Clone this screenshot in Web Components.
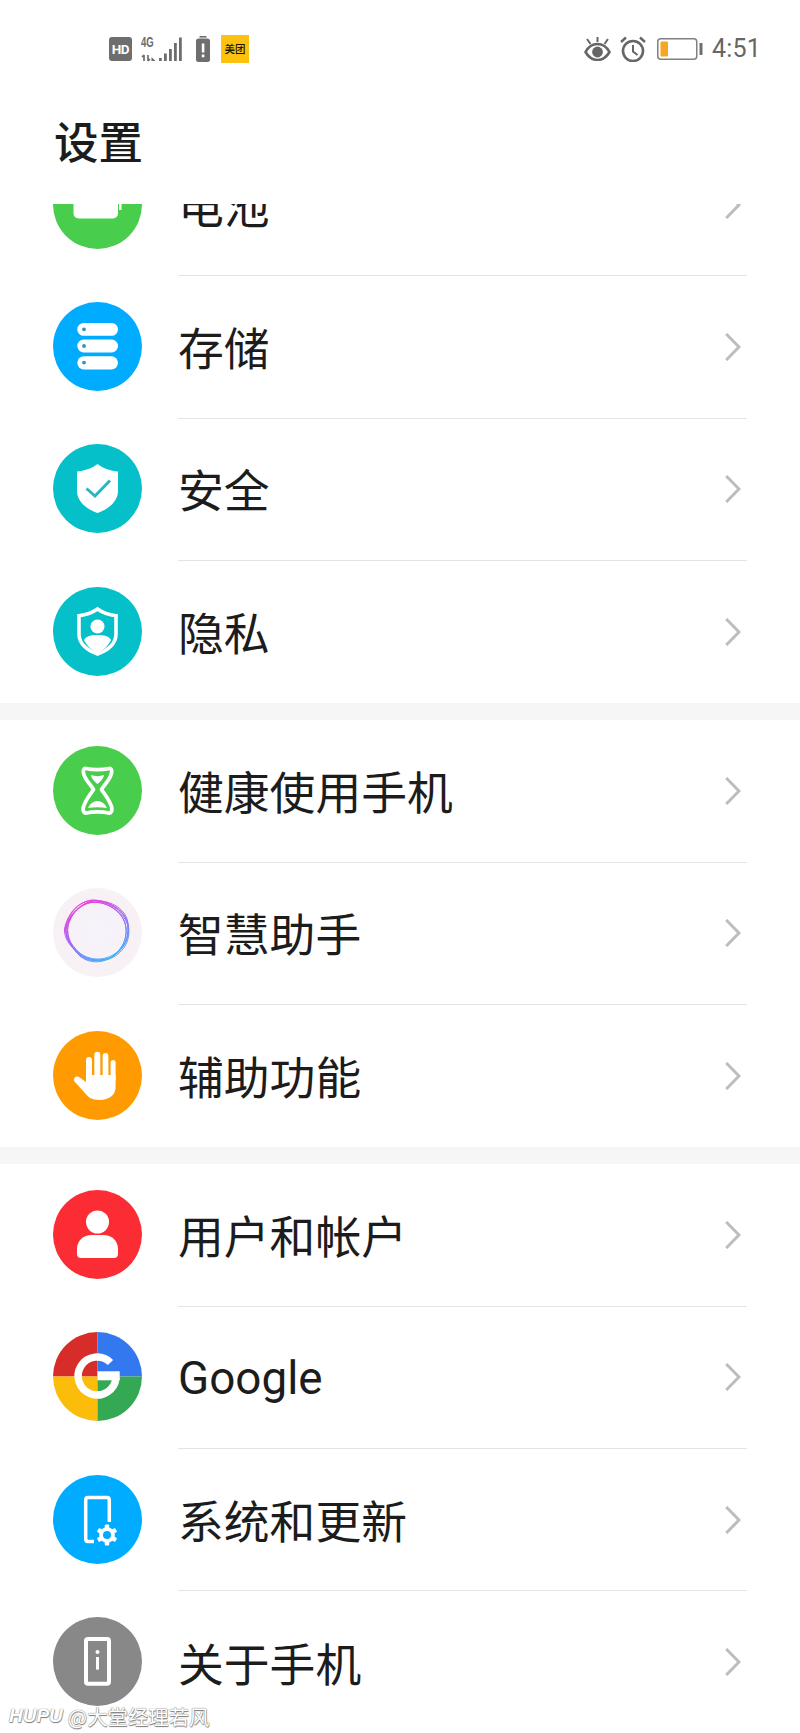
<!DOCTYPE html>
<html lang="zh">
<head>
<meta charset="utf-8">
<title>设置</title>
<style>
html,body{margin:0;padding:0;background:#fff;}
body{width:800px;height:1733px;overflow:hidden;position:relative;font-family:"Noto Sans CJK SC","Noto Sans",sans-serif;color:#1c1c1c;}
</style>
</head>
<body>
<status-bar></status-bar>
<page-title>设置</page-title>
<settings-list>
  <settings-section>
    <settings-row icon="battery">电池</settings-row>
    <settings-row icon="storage">存储</settings-row>
    <settings-row icon="security">安全</settings-row>
    <settings-row icon="privacy" last>隐私</settings-row>
  </settings-section>
  <settings-section>
    <settings-row icon="health">健康使用手机</settings-row>
    <settings-row icon="assistant">智慧助手</settings-row>
    <settings-row icon="access" last>辅助功能</settings-row>
  </settings-section>
  <settings-section>
    <settings-row icon="user">用户和帐户</settings-row>
    <settings-row icon="google"><span style="font-family:Roboto,'Noto Sans',sans-serif;display:inline-block;padding-top:4px">Google</span></settings-row>
    <settings-row icon="system">系统和更新</settings-row>
    <settings-row icon="about" last>关于手机</settings-row>
  </settings-section>
</settings-list>
<water-mark></water-mark>
<script>
const ICONS = {
  battery: `<circle cx="44.5" cy="44.5" r="44.5" fill="#48cd4c"/>
    <rect x="20.5" y="22" width="44.5" height="36.5" rx="5" fill="#fff"/>
    <rect x="66" y="38" width="2.5" height="12" fill="#fff"/>`,
  storage: `<circle cx="44.5" cy="44.5" r="44.5" fill="#00acff"/>
    <g fill="#fff"><rect x="24.3" y="21" width="40.7" height="12.8" rx="6.4"/><rect x="24.3" y="37.6" width="40.7" height="12.8" rx="6.4"/><rect x="24.3" y="54.2" width="40.7" height="13.2" rx="6.6"/></g>
    <g fill="#2a93cf"><circle cx="31" cy="27.3" r="1.9"/><circle cx="31" cy="44" r="1.9"/><circle cx="31" cy="60.6" r="1.9"/></g>`,
  security: `<circle cx="44.5" cy="44.5" r="44.5" fill="#05bfc9"/>
    <path d="M44.5 20 C50 24.5 58 27 65 27.5 V47 C65 57 56 65 44.5 69 C33 65 24 57 24 47 V27.5 C31 27 39 24.5 44.5 20Z" fill="#fff"/>
    <path d="M33.5 44.5 L42 52 L57 36.5" fill="none" stroke="#2ab6bf" stroke-width="3"/>`,
  privacy: `<circle cx="44.5" cy="44.5" r="44.5" fill="#05bfc9"/>
    <path d="M44.5 22 C50 26 57 28 63 28.7 V47 C63 56.5 55 63.8 44.5 67 C34 63.8 26 56.5 26 47 V28.7 C32 28 39 26 44.5 22Z" fill="none" stroke="#fff" stroke-width="3.6"/>
    <circle cx="44.5" cy="39.5" r="7" fill="#fff"/>
    <path d="M31 53 C33 49 38 48 44.5 48 C51 48 56 49 58 53 C54.5 60 49 64 44.5 66 C40 64 34.5 60 31 53Z" fill="#fff"/>`,
  health: `<circle cx="44.5" cy="44.5" r="44.5" fill="#48cd4c"/>
    <path d="M33 22.5 C39 24 50 24 56 22.5 C58.5 22 59 24.5 58.5 27 C57.5 33 52 38 48.5 43.5 C52 49 57.5 55 58.8 62 C59.2 65 58 67.5 55.5 67 C50 65.5 39 65.5 33.5 67 C31 67.5 29.8 65 30.2 62 C31.5 55 37 49 40.5 43.5 C37 38 31.5 33 30.5 27 C30 24.5 30.5 22 33 22.5Z" fill="none" stroke="#fff" stroke-width="3.8" stroke-linejoin="round"/>
    <path d="M38 29 C42 30.5 47 30.5 51 29 C50.5 33 47 36 44.5 38 C42 36 38.5 33 38 29Z" fill="#fff"/>
    <path d="M35 62 C37.5 57 41 55 44.5 55 C48 55 51.5 57 54 62 C48 61 41 61 35 62Z" fill="#fff"/>`,
  assistant: `<defs>
      <radialGradient id="bg" cx="50%" cy="50%" r="55%"><stop offset="0" stop-color="#f5f3fc"/><stop offset="1" stop-color="#f8f1f4"/></radialGradient>
      <linearGradient id="ring" x1="0.2" y1="0" x2="0.75" y2="1"><stop offset="0" stop-color="#f03cd6"/><stop offset="0.45" stop-color="#a860f0"/><stop offset="1" stop-color="#3eb4fa"/></linearGradient>
    </defs>
    <circle cx="44.5" cy="44.5" r="44.5" fill="url(#bg)"/>
    <g fill="none" stroke="url(#ring)" stroke-width="1">
      <path d="M13 40 C15 25 28 12 40 12 C52 12 71 20 75 36 C77 50 72 60 60 68 C50 76 34 76 25 66 C18 58 12 50 13 40Z"/>
      <path d="M11.5 41 C14 27 24 14 37 13 C52 11 69 17 74 31 C78 45 76 57 65 66 C54 75 38 74 28 68 C19 60 11 52 11.5 41Z"/>
      <path d="M15 38 C18 25 30 13 44 14.5 C56 15 71 24 73 40 C74 53 68 63 56 70.5 C44 74 30 71 22 62 C17 54 13 48 15 38Z"/>
      <path d="M13 43 C14 30 26 16 38 14.5 C50 12 68 22 72 35 C76 48 70 62 59 69 C47 74 34 73 26 65 C20 59 13 53 13 43Z"/>
      <path d="M15 37 C18 26 27 15 41 13 C55 13 70 22 75 38 C76 50 71 60 62 67 C51 74 36 75 27 68 C20 61 13 50 15 37Z"/>
      <path d="M12.5 39 C16 27 29 13.5 42 12.5 C54 14 70 19 74 34 C77 47 73 58 63 65 C52 73 37 73.5 25.5 64 C19 57 12 49 12.5 39Z"/>
    </g>`,
  access: `<circle cx="44.5" cy="44.5" r="44.5" fill="#ff9a00"/>
    <path d="M33 44 H62.6 V56 C62.6 64 56 69 47 69 C38 69 35 66 31 61 L21.5 50.5 C19.5 47.5 23 44 26 46 L33 51Z" fill="#fff"/>
    <g fill="#fff"><rect x="33" y="26" width="6" height="24" rx="3"/><rect x="41.3" y="20.7" width="6" height="28" rx="3"/><rect x="49.6" y="22" width="5.8" height="28" rx="2.9"/><rect x="57.6" y="29" width="5" height="22" rx="2.5"/></g>`,
  user: `<circle cx="44.5" cy="44.5" r="44.5" fill="#fb2c34"/>
    <circle cx="44.5" cy="32" r="11.5" fill="#fff"/>
    <path d="M39 45 H50 C59 45 65 51 65 59 V64 C65 66.5 63.5 68 61 68 H28 C25.5 68 24 66.5 24 64 V59 C24 51 30 45 39 45Z" fill="#fff"/>`,
  google: `<path d="M44.5 44.5 V0 A44.5 44.5 0 0 0 0 44.5Z" fill="#d62d2b"/>
    <path d="M44.5 44.5 V0 A44.5 44.5 0 0 1 89 44.5Z" fill="#3478f0"/>
    <path d="M44.5 44.5 H0 A44.5 44.5 0 0 0 44.5 89Z" fill="#fbbc0a"/>
    <path d="M44.5 44.5 H89 A44.5 44.5 0 0 1 44.5 89Z" fill="#34a853"/>
    <path d="M63 46 A19 19 0 1 1 57.5 30.5" fill="none" stroke="#fff" stroke-width="7.4"/>
    <rect x="44.5" y="39.3" width="22.2" height="9" fill="#fff"/>`,
  system: `<circle cx="44.5" cy="44.5" r="44.5" fill="#00acff"/>
    <path d="M41 66.5 H35 Q32.7 66.5 32.7 64 V25 Q32.7 22.5 35 22.5 H54 Q56.3 22.5 56.3 25 V47" fill="none" stroke="#fff" stroke-width="3.5"/>
    <g transform="translate(54 60)">
      <g fill="#fff"><circle r="7.8"/>
        <rect x="-2.2" y="-10.5" width="4.4" height="21" rx="1"/>
        <rect x="-2.2" y="-10.5" width="4.4" height="21" rx="1" transform="rotate(60)"/>
        <rect x="-2.2" y="-10.5" width="4.4" height="21" rx="1" transform="rotate(120)"/>
      </g>
      <circle r="4" fill="#00acff"/>
    </g>`,
  about: `<circle cx="44.5" cy="44.5" r="44.5" fill="#888"/>
    <rect x="33" y="22" width="23" height="44.7" rx="2" fill="none" stroke="#fff" stroke-width="4"/>
    <circle cx="44.5" cy="35" r="2" fill="#fff"/>
    <rect x="43" y="40" width="3" height="12.6" fill="#fff"/>`
};

function define(name, css, html, extra){
  const t = document.createElement('template');
  t.innerHTML = `<style>${css}</style>${html}`;
  customElements.define(name, class extends HTMLElement{
    constructor(){ super(); this.attachShadow({mode:'open'}).appendChild(t.content.cloneNode(true)); }
    connectedCallback(){ if(extra) extra(this); }
  });
}

define('status-bar', `
  :host{display:flex;height:98px;align-items:center;box-sizing:border-box;padding:0 39px 0 109px;font-family:Roboto,"Noto Sans CJK SC",sans-serif;color:#666;}
  .left,.right{display:flex;align-items:center;}
  .right{margin-left:auto;}
  .hd{width:23px;height:24px;border-radius:3px;background:#6e6e6e;color:#fff;font:700 13.5px/24px Roboto,sans-serif;text-align:center;letter-spacing:-.3px;}
  .net{position:relative;width:41px;height:25px;margin-left:9px;}
  .net b{position:absolute;left:0;top:-1px;font:700 14px/13px "Liberation Sans",sans-serif;color:#6a6a6a;transform:scaleX(.68);transform-origin:0 0;}
  .net svg{position:absolute;left:0;top:0;}
  .warn{margin-left:14px;}
  .mt{margin-left:11px;width:28px;height:28px;background:#fdc20f;color:#1b1400;font:500 10.5px/28px "Noto Sans CJK SC",sans-serif;text-align:center;white-space:nowrap;overflow:hidden;}
  .time{font:400 25px/30px Roboto,sans-serif;margin-left:9px;color:#666;letter-spacing:.2px;}
  svg{display:block;}
`, `
  <div class="left">
    <div class="hd">HD</div>
    <div class="net"><b>4G</b>
      <svg width="41" height="25" viewBox="0 0 41 25" fill="#6e6e6e">
        <path d="M3 24 V18 M1 20 L3 18 M7 18 V24 M7 24 L9 22" fill="none" stroke="#6e6e6e" stroke-width="1.7"/>
        <path d="M10.5 20 V24 H14.5 Z"/>
        <rect x="18" y="21" width="2.8" height="3"/><rect x="23" y="16.5" width="2.8" height="7.5"/><rect x="28" y="12" width="2.8" height="12"/><rect x="33" y="6" width="2.8" height="18"/><rect x="38" y="0.5" width="2.8" height="23.5"/>
      </svg>
    </div>
    <svg class="warn" width="14" height="26" viewBox="0 0 14 26">
      <rect x="3.5" y="0" width="7" height="1.6" fill="#6e6e6e"/>
      <rect x="0" y="2.5" width="14" height="23.5" rx="2.5" fill="#6e6e6e"/>
      <rect x="5.8" y="7.5" width="2.6" height="9" fill="#fff"/><rect x="5.8" y="18.5" width="2.6" height="2.8" fill="#fff"/>
    </svg>
    <div class="mt">美团</div>
  </div>
  <div class="right">
    <svg width="27" height="24" viewBox="0 0 27 24" fill="none" stroke="#666" stroke-width="2.6">
      <path d="M1.5 15 C5 8.5 9 7 13.5 7 C18 7 22 8.5 25.5 15 C22 21 18 23 13.5 23 C9 23 5 21 1.5 15Z"/>
      <circle cx="13.5" cy="15" r="5.4" fill="#666" stroke="none"/>
      <path d="M13.5 0 V5 M3 2 L6.5 7 M24 2 L20.5 7" stroke-width="2"/>
    </svg>
    <svg style="margin-left:9px" width="26" height="26" viewBox="0 0 26 26" fill="none" stroke="#666" stroke-width="2.6">
      <circle cx="13" cy="15" r="10"/>
      <path d="M13 9 V15.5 L17.5 19" stroke-width="2"/>
      <path d="M1 6 L6 1.5 M25 6 L20 1.5" stroke-width="2.4"/>
    </svg>
    <svg style="margin-left:11px" width="46" height="22" viewBox="0 0 46 22">
      <rect x=".75" y=".75" width="39" height="20.5" rx="3" fill="#fff" stroke="#808080" stroke-width="1.5"/>
      <rect x="3.5" y="3.5" width="7.5" height="15" rx="1" fill="#f5a623"/>
      <rect x="42.5" y="5" width="3" height="12" rx=".5" fill="#6e6e6e"/>
    </svg>
    <div class="time">4:51</div>
  </div>
`);

define('page-title', `
  :host{display:block;box-sizing:border-box;height:106px;padding:0 0 22px 54px;font:500 44.5px/84px "Noto Sans CJK SC",sans-serif;color:#1c1c1c;}
`, `<slot></slot>`);

define('settings-list', `
  :host{display:block;height:1529px;overflow:hidden;}
  .scroller{margin-top:-70px;display:flex;flex-direction:column;gap:17px;}
`, `<div class="scroller"><slot></slot></div>`);

define('settings-section', `
  :host{display:block;background:#fff;box-shadow:0 17px 0 #f6f6f6;}
  :host(:last-child){box-shadow:none;}
`, `<slot></slot>`);

define('settings-row', `
  :host{display:flex;height:142.33px;align-items:center;padding-left:53px;padding-right:53px;font:400 45.8px/1 "Noto Sans CJK SC",sans-serif;color:#1c1c1c;}
  svg.ic{flex:none;display:block;width:89px;height:89px;margin-bottom:2px;}
  .body{flex:1;align-self:stretch;margin-left:36px;display:flex;align-items:center;justify-content:space-between;border-bottom:1.5px solid #e4e4e4;box-sizing:border-box;padding-right:6px;}
  :host([last]) .body{border-bottom:none;}
  .chev{flex:none;display:block;}
`, `
  <svg class="ic" viewBox="0 0 89 89"></svg>
  <div class="body">
    <span class="label"><slot></slot></span>
    <svg class="chev" width="16" height="28" viewBox="0 0 16 28" fill="none" stroke="#bdbdbd" stroke-width="3"><path d="M1.2 1 L14 14 L1.2 27"/></svg>
  </div>
`, el => { el.shadowRoot.querySelector('svg.ic').innerHTML = ICONS[el.getAttribute('icon')] || ''; });

define('water-mark', `
  :host{position:absolute;left:9px;top:1703px;display:flex;align-items:center;gap:5px;color:#fff;white-space:nowrap;line-height:26px;text-shadow:0 0 1px #888,0 0 1px #888,.5px .5px 1px #777;}
  .b{font:italic 700 19px/26px "Liberation Sans",sans-serif;}
  .n{font:400 20.4px/26px "Noto Sans CJK SC",sans-serif;}
`, `<span class="b">HUPU</span><span class="n">@大堂经理若风</span>`);
</script>
</body>
</html>
